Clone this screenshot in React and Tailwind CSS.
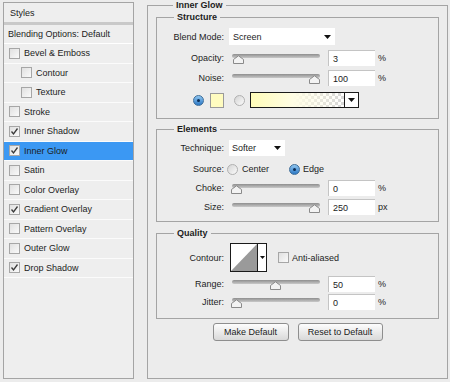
const styles = [
  { label: 'Bevel & Emboss' },
  { label: 'Contour', indent: true },
  { label: 'Texture', indent: true },
  { label: 'Stroke' },
  { label: 'Inner Shadow', checked: true },
  { label: 'Inner Glow', checked: true, active: true },
  { label: 'Satin' },
  { label: 'Color Overlay' },
  { label: 'Gradient Overlay', checked: true },
  { label: 'Pattern Overlay' },
  { label: 'Outer Glow' },
  { label: 'Drop Shadow', checked: true },
];

function Check({ checked }) {
  return (
    <span className="w-[11px] h-[11px] shrink-0 border border-[#a6a6a6] bg-gradient-to-br from-[#e0e0e0] to-[#fafafa] flex items-center justify-center">
      {checked && (
        <svg width="9" height="9" viewBox="0 0 9 9">
          <path d="M1.5 4.5 L3.5 7 L7.5 1.5" fill="none" stroke="#3a3a3a" strokeWidth="1.3" />
        </svg>
      )}
    </span>
  );
}

function Radio({ on }) {
  return on ? (
    <span className="block w-[11px] h-[11px] shrink-0 rounded-full border border-[#3d6d99] bg-gradient-to-b from-[#8fc6f0] to-[#2a78c4]">
      <span className="block mt-[3px] ml-[3px] w-[3px] h-[3px] rounded-full bg-[#0b2d55]" />
    </span>
  ) : (
    <span className="block w-[11px] h-[11px] shrink-0 rounded-full border border-[#b0b0b0] bg-gradient-to-br from-[#d4d4d4] to-[#fbfbfb]" />
  );
}

function Arrow() {
  return (
    <svg width="7" height="4" viewBox="0 0 7 4">
      <path d="M0 0 H7 L3.5 4 Z" fill="#111" />
    </svg>
  );
}

function Slider({ value }) {
  return (
    <div className="relative w-[88px] h-[10px] ml-[3px]">
      <div className="mt-[1px] h-[4px] rounded-full bg-gradient-to-b from-[#8e8e8e] to-[#c9c9c9]" />
      <svg
        width="11"
        height="9"
        viewBox="0 0 11 9"
        className="absolute top-[1px]"
        style={{ left: `calc(${value}% - ${value * 0.1}px - 1px)` }}
      >
        <path d="M0.5 8.5 V4.5 L5.5 0.8 L10.5 4.5 V8.5 Z" fill="#f3f3f3" stroke="#8a8a8a" />
      </svg>
    </div>
  );
}

function Field({ value, unit }) {
  return (
    <div className="flex items-center ml-[8px]">
      <div className="w-[47px] h-[16px] bg-white border-t border-l border-[#c4c4c4] flex items-center pl-[4px]">
        {value}
      </div>
      <span className="ml-[3px]">{unit}</span>
    </div>
  );
}

function Label({ children }) {
  return <div className="w-[68px] text-right pr-[1px] shrink-0">{children}</div>;
}

function SliderRow({ label, value, pos, unit, className }) {
  return (
    <div className={`flex items-center h-[16px] ${className}`}>
      <Label>{label}</Label>
      <div className="ml-[4px]">
        <Slider value={pos} />
      </div>
      <Field value={value} unit={unit} />
    </div>
  );
}

function Legend({ children, className }) {
  return (
    <div className={`-mt-[7px] px-[3px] w-fit leading-[12px] font-bold bg-[#ececec] ${className}`}>
      {children}
    </div>
  );
}

function Button({ children, className }) {
  return (
    <div
      className={`h-[18px] flex items-center justify-center rounded-[3px] border border-[#8e8e8e] bg-gradient-to-b from-[#fdfdfd] to-[#d9d9d9] ${className}`}
    >
      {children}
    </div>
  );
}

export default function App() {
  return (
    <div className="w-[450px] h-[382px] bg-[#ececec] flex items-start text-[9px] leading-[12px] text-[#1c1c1c] font-['Liberation_Sans',Arial,sans-serif] overflow-hidden">
      <div className="mt-[2px] ml-[3px] w-[131px] h-[377px] border border-[#a4a4a4] bg-[#eeeeee] flex flex-col">
        <div className="h-[19px] flex items-center pl-[6px]">Styles</div>
        <div className="h-[3px] bg-[#c9c9c9]" />
        <div className="h-[19px] flex items-center pl-[4px] border-b border-white">Blending Options: Default</div>
        {styles.map((s) => (
          <div
            key={s.label}
            className={`h-[19.5px] flex items-center border-b border-[#fbfbfb] ${
              s.indent ? 'pl-[17px]' : 'pl-[5px]'
            } ${s.active ? 'bg-[#3b98f3]' : ''}`}
          >
            <Check checked={s.checked} />
            <span className="ml-[4px]">{s.label}</span>
          </div>
        ))}
      </div>

      <div className="mt-[5px] ml-[13px] w-[301px] h-[374px] border border-[#a4a4a4] px-[8px] flex flex-col">
        <Legend className="ml-[17px]">Inner Glow</Legend>

        <div className="mt-[6px] h-[102px] border border-[#a4a4a4] flex flex-col">
          <Legend className="ml-[17px]">Structure</Legend>
          <div className="mt-[5px] h-[17px] flex items-center">
            <Label>Blend Mode:</Label>
            <div className="ml-[4px] w-[106px] h-[17px] bg-white flex items-center justify-between pl-[4px] pr-[4px]">
              <span>Screen</span>
              <Arrow />
            </div>
          </div>
          <SliderRow className="mt-[5px]" label="Opacity:" value="3" pos={3} unit="%" />
          <SliderRow className="mt-[4px]" label="Noise:" value="100" pos={100} unit="%" />
          <div className="mt-[6px] h-[16px] flex items-center pl-[36px]">
            <Radio on />
            <div className="ml-[6px] w-[14px] h-[15px] border border-[#9a9a9a] bg-[#fffcc0]" />
            <div className="ml-[10px]">
              <Radio />
            </div>
            <div className="ml-[5px] flex h-[16px] border border-[#1a1a1a]">
              <div className="w-[93px] h-full bg-[linear-gradient(to_right,#fffcb8,#fffde4_45%,rgba(255,255,255,0)),repeating-conic-gradient(#d6d6d6_0_25%,#ffffff_0_50%)] bg-[length:100%_100%,6px_6px]" />
              <div className="w-[14px] border-l border-[#1a1a1a] bg-white flex items-center justify-center">
                <Arrow />
              </div>
            </div>
          </div>
        </div>

        <div className="mt-[10px] h-[93px] border border-[#a4a4a4] flex flex-col">
          <Legend className="ml-[17px]">Elements</Legend>
          <div className="mt-[5px] h-[16px] flex items-center">
            <Label>Technique:</Label>
            <div className="ml-[4px] w-[56px] h-[16px] bg-white flex items-center justify-between pl-[3px] pr-[4px]">
              <span>Softer</span>
              <Arrow />
            </div>
          </div>
          <div className="mt-[6px] h-[14px] flex items-center">
            <Label>Source:</Label>
            <div className="ml-[2px]">
              <Radio />
            </div>
            <span className="ml-[4px]">Center</span>
            <div className="ml-[20px]">
              <Radio on />
            </div>
            <span className="ml-[3px]">Edge</span>
          </div>
          <SliderRow className="mt-[4px]" label="Choke:" value="0" pos={0} unit="%" />
          <SliderRow className="mt-[3px]" label="Size:" value="250" pos={100} unit="px" />
        </div>

        <div className="mt-[11px] h-[86px] border border-[#a4a4a4] flex flex-col">
          <Legend className="ml-[17px]">Quality</Legend>
          <div className="mt-[4px] h-[29px] flex items-center">
            <Label>Contour:</Label>
            <div className="ml-[5px] flex h-[29px] border border-[#1a1a1a] bg-white">
              <svg width="26" height="27" viewBox="0 0 26 27" className="block">
                <path d="M0 27 L26 0 V27 Z" fill="#9a9a9a" />
              </svg>
              <div className="w-[9px] border-l border-[#1a1a1a] flex items-center justify-center">
                <svg width="5" height="3" viewBox="0 0 5 3">
                  <path d="M0 0 H5 L2.5 3 Z" fill="#111" />
                </svg>
              </div>
            </div>
            <div className="ml-[11px]">
              <Check />
            </div>
            <span className="ml-[3px]">Anti-aliased</span>
          </div>
          <SliderRow className="mt-[4px]" label="Range:" value="50" pos={50} unit="%" />
          <SliderRow className="mt-[2px]" label="Jitter:" value="0" pos={0} unit="%" />
        </div>

        <div className="mt-[4px] flex justify-center gap-[9px]">
          <Button className="w-[76px]">Make Default</Button>
          <Button className="w-[85px]">Reset to Default</Button>
        </div>
      </div>
    </div>
  );
}
